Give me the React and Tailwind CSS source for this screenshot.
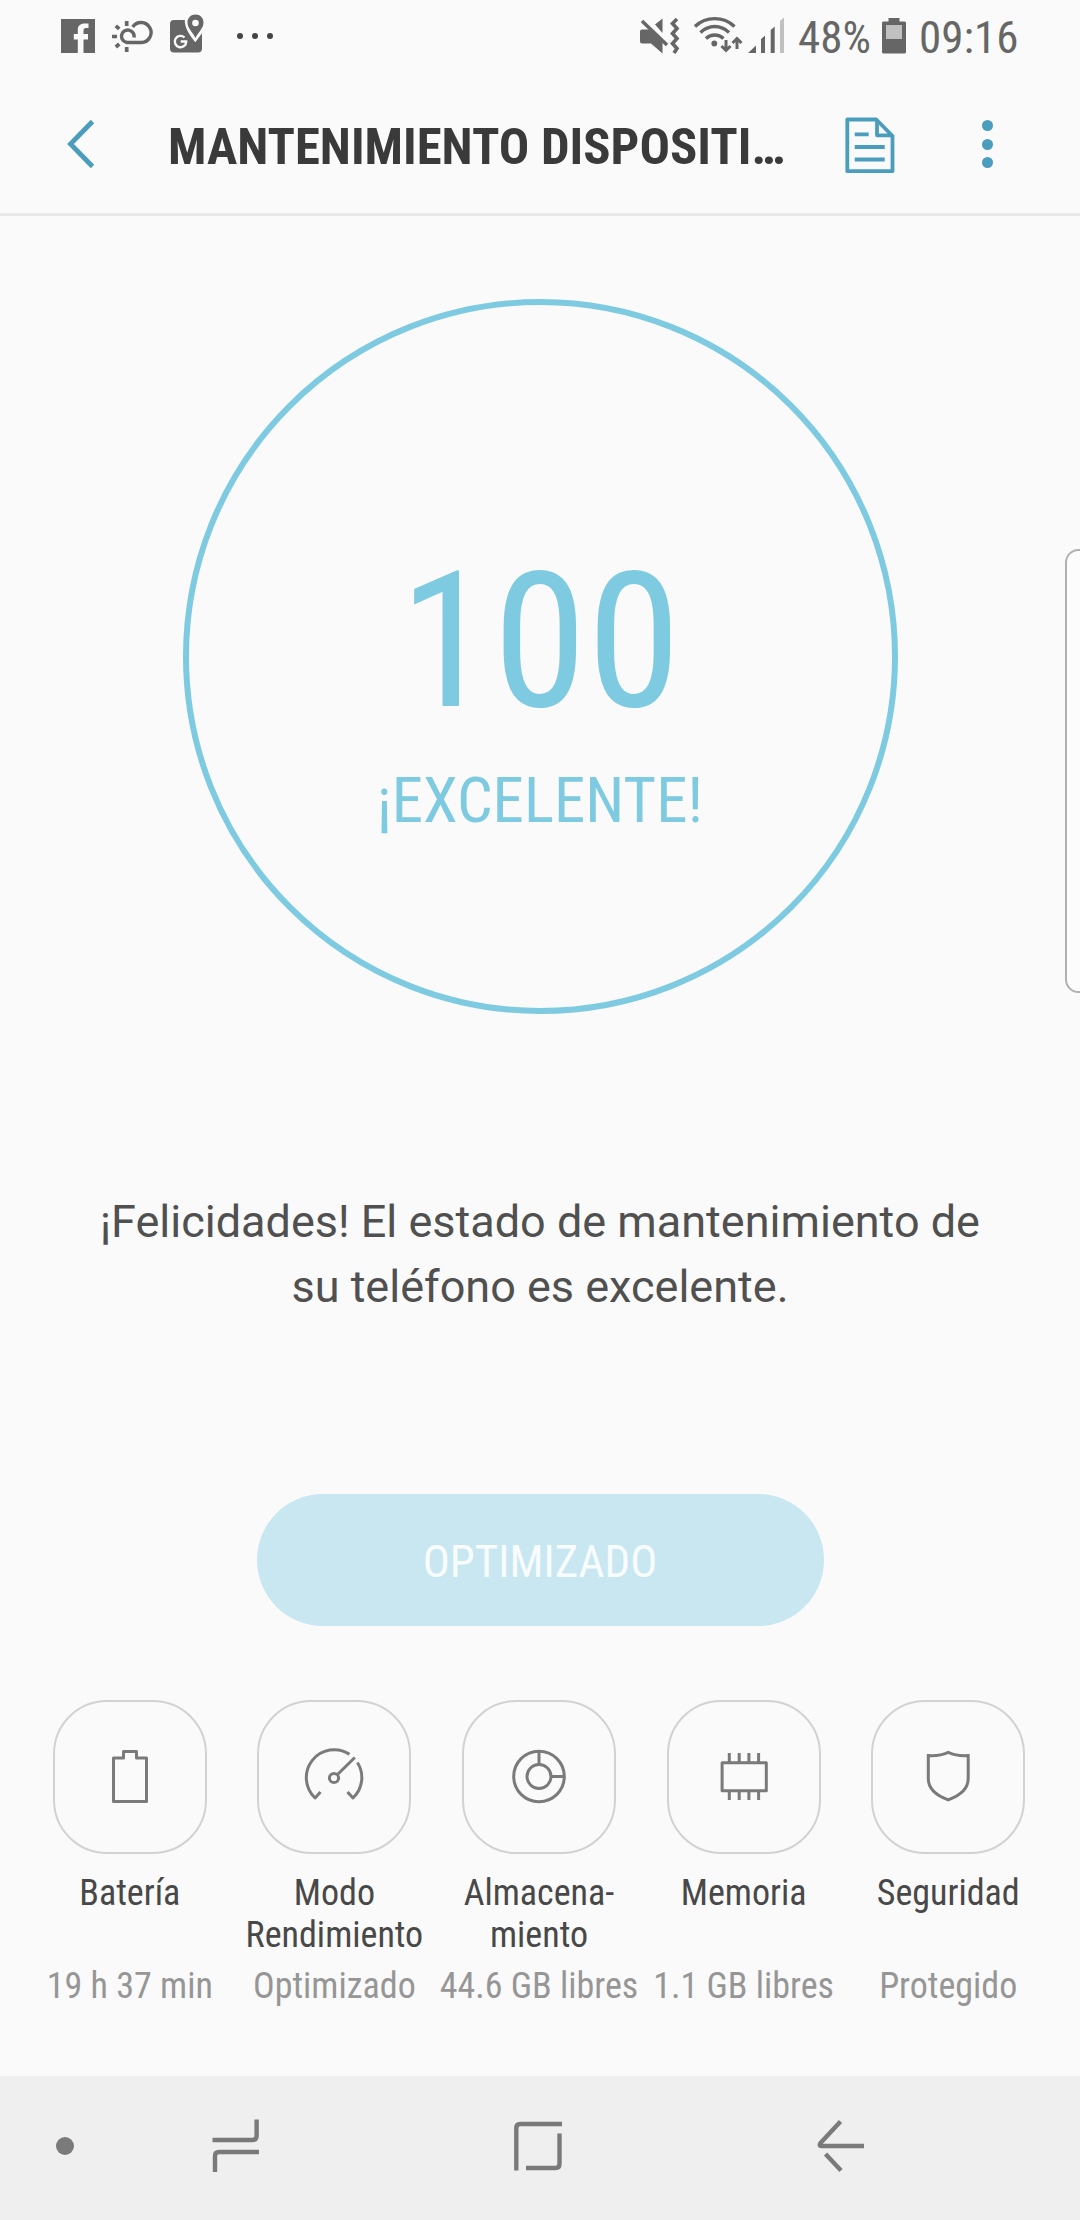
import React from "react";

const BatteryIcon = () => (
  <path d="M15.5 13h10V6.5h13V13h10v43.5h-33z" />
);

const GaugeIcon = () => (
  <>
    <path d="M18.5 47L13 53A28 28 0 0 1 47.5 9.2M55.4 17.5A28 28 0 0 1 51 53l-5.5-6" />
    <circle cx="32" cy="33" r="4.6" />
    <path d="M35.5 29.5L52.8 12.5" />
  </>
);

const StorageIcon = () => (
  <>
    <circle cx="32" cy="31.5" r="25.3" />
    <circle cx="32" cy="31.5" r="12" />
    <path d="M32 6v13.5M44 31.5h13" />
  </>
);

const MemoryIcon = () => (
  <>
    <path d="M10.1 17.7h44.2v28H10.1z" />
    <path d="M17.3 8v9M27.2 8v9M36.9 8v9M46.6 8v9M17.3 46v9M27.2 46v9M36.9 46v9M46.6 46v9" />
  </>
);

const ShieldIcon = () => (
  <path
    strokeLinejoin="miter"
    d="M12.3 10.6c8 .6 14-.5 19.9-3.2 6 2.7 12 3.8 20 3.2V33.5c0 10.5-8 17-20 21.3-12-4.3-19.9-10.8-19.9-21.3z"
  />
);

const items = [
  { label: "Batería", status: "19 h 37 min", Icon: BatteryIcon },
  { label: "Modo\nRendimiento", status: "Optimizado", Icon: GaugeIcon },
  { label: "Almacena-\nmiento", status: "44.6 GB libres", Icon: StorageIcon },
  { label: "Memoria", status: "1.1 GB libres", Icon: MemoryIcon },
  { label: "Seguridad", status: "Protegido", Icon: ShieldIcon },
];

const StatusBar = () => (
  <div className="flex h-18 items-center justify-between pl-[61px] pr-[64px] text-[#666666]">
    <div className="flex h-full items-center">
      {/* Facebook */}
      <svg className="h-18 w-[34px]" viewBox="0 0 34 72" fill="currentColor">
        <path d="M0 19h34v34H22.5V39.5H27V34h-4.5v-3.5c0-1.7 1-2.5 2.5-2.5h2.5v-4.5H24c-5 0-7.2 2.5-7.2 6.5v4h-4v5.5h4V53H0z" />
      </svg>
      {/* Weather */}
      <svg className="ml-[16px] h-18 w-[43px]" viewBox="0 0 43 72" fill="none" stroke="currentColor" strokeWidth="3.4">
        <path d="M23 37.5a6.3 6.3 0 1 0-7 5h14.5a10 10 0 1 0-8.8-15.5" />
        <path d="M15.7 21v5M15.7 47v5M1 36.5h5M4.8 25.8l3.5 3M4.8 47l3.5-3" strokeWidth="3.7" />
      </svg>
      {/* Google Maps */}
      <svg className="ml-[16px] h-18 w-[35px]" viewBox="0 0 35 72">
        <path d="M4 20h10.8c-.4 8 5.5 16 10.5 22.2l6.7-9V48.5a4 4 0 0 1-4 4H4a4 4 0 0 1-4-4V24a4 4 0 0 1 4-4z" fill="currentColor" />
        <path d="M25.5 14.5c-4.6 0-8 3.5-8 8 0 5.5 5 9.5 8 15.5 3-6 8-10 8-15.5 0-4.5-3.4-8-8-8z" fill="currentColor" />
        <circle cx="25.5" cy="23" r="3.3" fill="#fafafa" />
        <path d="M14.5 37.5a5.7 5.7 0 1 0 1.7 4h-5.5" fill="none" stroke="#fafafa" strokeWidth="2.4" />
      </svg>
      <div className="ml-[32px] flex gap-[9px]">
        <span className="size-[6px] rounded-full bg-[#444444]" />
        <span className="size-[6px] rounded-full bg-[#444444]" />
        <span className="size-[6px] rounded-full bg-[#444444]" />
      </div>
    </div>

    <div className="flex h-full items-center">
      {/* Muted with vibration */}
      <svg className="h-18 w-[40px]" viewBox="0 0 40 72" fill="currentColor">
        <path d="M0 31.5a2 2 0 0 1 2-2h7l13.5 13v11L11 43.5H2a2 2 0 0 1-2-2zM15 24.5l7.5-6v14.5z" />
        <path d="M2 21l25 24" fill="none" stroke="currentColor" strokeWidth="3.5" />
        <path d="M37 19l-4.5 4.5 4.5 5-4.5 5 4.5 5-4.5 5 4.5 5-3 4.5" fill="none" stroke="currentColor" strokeWidth="3.6" />
      </svg>
      {/* Wi-Fi */}
      <svg className="ml-[14px] h-18 w-[49px]" viewBox="0 0 49 72" fill="none" stroke="currentColor" strokeWidth="3.4">
        <path d="M1 26.5c11-10.5 28.5-10.5 39.5 0M6.5 32.5c8-8 20.5-8 28.5 0M12 38.5c5-4.7 12.5-4.7 17.5 0" />
        <circle cx="20.3" cy="43.5" r="2.9" fill="currentColor" stroke="none" />
        <path d="M32 40v11M27.5 46l4.5 4.5 4.5-4.5M43 49V38M38.5 43l4.5-4.5 4.5 4.5" strokeWidth="3" />
      </svg>
      {/* Signal */}
      <svg className="ml-[5px] h-18 w-[37px]" viewBox="0 0 37 72" fill="currentColor">
        <path d="M0 53l8-7.5V53zM13 53V39l4-3.5V53zM22.7 53V30l4-3.5V53z" />
        <path d="M32 53V21l4-3.5V53z" fill="#c0c0c0" />
      </svg>
      <span className="ml-[13px] w-[72px] whitespace-nowrap pt-[3px] text-[45px] leading-[74px]">48%</span>
      {/* Battery level */}
      <svg className="ml-[12px] h-18 w-[24px]" viewBox="0 0 24 72" fill="currentColor">
        <path d="M1 21.5h5.5V18h11v3.5H23l1 1V52.5l-1 1H1l-1-1v-30z" />
        <path d="M4 25h16v14H4z" fill="#c0c0c0" />
      </svg>
      <span className="ml-[13px] w-[97px] whitespace-nowrap pt-[3px] text-[45px] leading-[74px]">09:16</span>
    </div>
  </div>
);

const Header = () => (
  <header className="flex h-36 items-center border-b-[3px] border-[#e8e8e8] text-[#4b9dbd]">
    <svg className="mt-[2px] ml-[66px] h-[52px] w-[32px]" viewBox="0 0 32 52" fill="none" stroke="currentColor" strokeWidth="4.8">
      <path d="M26.5 3.5L4.5 26l22 22.5" />
    </svg>
    <h1 className="mt-[9px] ml-[70px] w-[650px] whitespace-nowrap text-[50.7px] leading-[60px] font-bold text-[#3a3a3a]">
      MANTENIMIENTO DISPOSITI…
    </h1>
    <svg className="mt-[5px] ml-[27px] h-[60px] w-[50px]" viewBox="0 0 50 60" fill="none" stroke="currentColor" strokeWidth="3.8" strokeLinejoin="round">
      <path d="M2.3 4.5h29l16.2 16.5v35.2H2.3z" />
      <path d="M32 5v15.3h15.5M9.7 19.3h14M9.7 32h30M9.7 44.5h30" />
    </svg>
    <div className="mt-[3px] ml-[87px] flex flex-col gap-[7.5px]">
      <span className="size-[11px] rounded-full bg-current" />
      <span className="size-[11px] rounded-full bg-current" />
      <span className="size-[11px] rounded-full bg-current" />
    </div>
  </header>
);

const NavBar = () => (
  <nav className="mt-auto flex h-36 items-center bg-[#efefef] text-[#7a7a7a]">
    <span className="mt-[-4px] ml-[56px] size-[18px] rounded-full bg-current" />
    <svg className="ml-[136px] h-36 w-[52px]" viewBox="0 0 52 144" fill="none" stroke="currentColor" strokeWidth="4.4">
      <path d="M46.6 43.5V60q0 4-4 4H2.5M49 76H9q-4 0-4 4v16" />
    </svg>
    <svg className="ml-[249px] h-36 w-[54px]" viewBox="0 0 54 144" fill="none" stroke="currentColor" strokeWidth="4.4">
      <path d="M5.3 94.5V52q0-4 4-4H51M48.5 57.5V88q0 4-4 4H15" />
    </svg>
    <svg className="ml-[250px] h-36 w-[52px]" viewBox="0 0 52 144" fill="none" stroke="currentColor" strokeWidth="4.4" strokeLinejoin="round">
      <path d="M25.5 45.5L5.5 67q-2 3 1 3H49M10.5 78l15.5 16.5" />
    </svg>
  </nav>
);

const App = () => {
  return (
    <div className="relative flex h-[2220px] w-[1080px] flex-col overflow-hidden bg-[#fafafa] font-['Roboto_Condensed',Roboto,sans-serif] font-stretch-condensed">
      <StatusBar />
      <Header />

      <main className="flex flex-col items-center">
        {/* Score */}
        <div className="mt-[83px] flex size-[715px] flex-col items-center rounded-full border-[6px] border-[#7ecae1] text-[#7ecae1]">
          <div className="mt-[212px] text-[190px] leading-[248px]">100</div>
          <div className="mt-[-4px] text-[63px] leading-[80px]">¡EXCELENTE!</div>
        </div>

        <p className="mt-[175px] text-center font-[Roboto,sans-serif] text-[45px] leading-[65px] font-stretch-normal text-[#505050]">
          ¡Felicidades! El estado de mantenimiento de
          <br />
          su teléfono es excelente.
        </p>

        <button className="mt-[175px] h-[132px] w-[567px] rounded-full bg-[#c8e7f1] pt-[4px] text-[45px] text-[#f8fcfd]">
          OPTIMIZADO
        </button>

        <div className="mt-[74px] mr-[2px] grid w-[1023px] grid-cols-5">
          {items.map(({ label, status, Icon }) => (
            <div key={status} className="flex flex-col items-center text-center text-[36px] leading-[42px]">
              <div className="flex size-[154px] items-center justify-center rounded-[54px] border-2 border-[#d2d2d2]">
                <svg className="size-16" viewBox="0 0 64 64" fill="none" stroke="#7a7a7a" strokeWidth="3" strokeLinejoin="round">
                  <Icon />
                </svg>
              </div>
              <div className="mt-[18px] h-[84px] whitespace-pre text-[#484848]">{label}</div>
              <div className="mt-[9px] whitespace-nowrap text-[#969696]">{status}</div>
            </div>
          ))}
        </div>
      </main>

      <NavBar />

      {/* Edge panel handle */}
      <div className="absolute top-[549px] right-[-12px] h-[444px] w-[27px] rounded-[18px] border-2 border-[#b0b0b0] bg-[#fcfcfc]" />
    </div>
  );
};

export default App;
